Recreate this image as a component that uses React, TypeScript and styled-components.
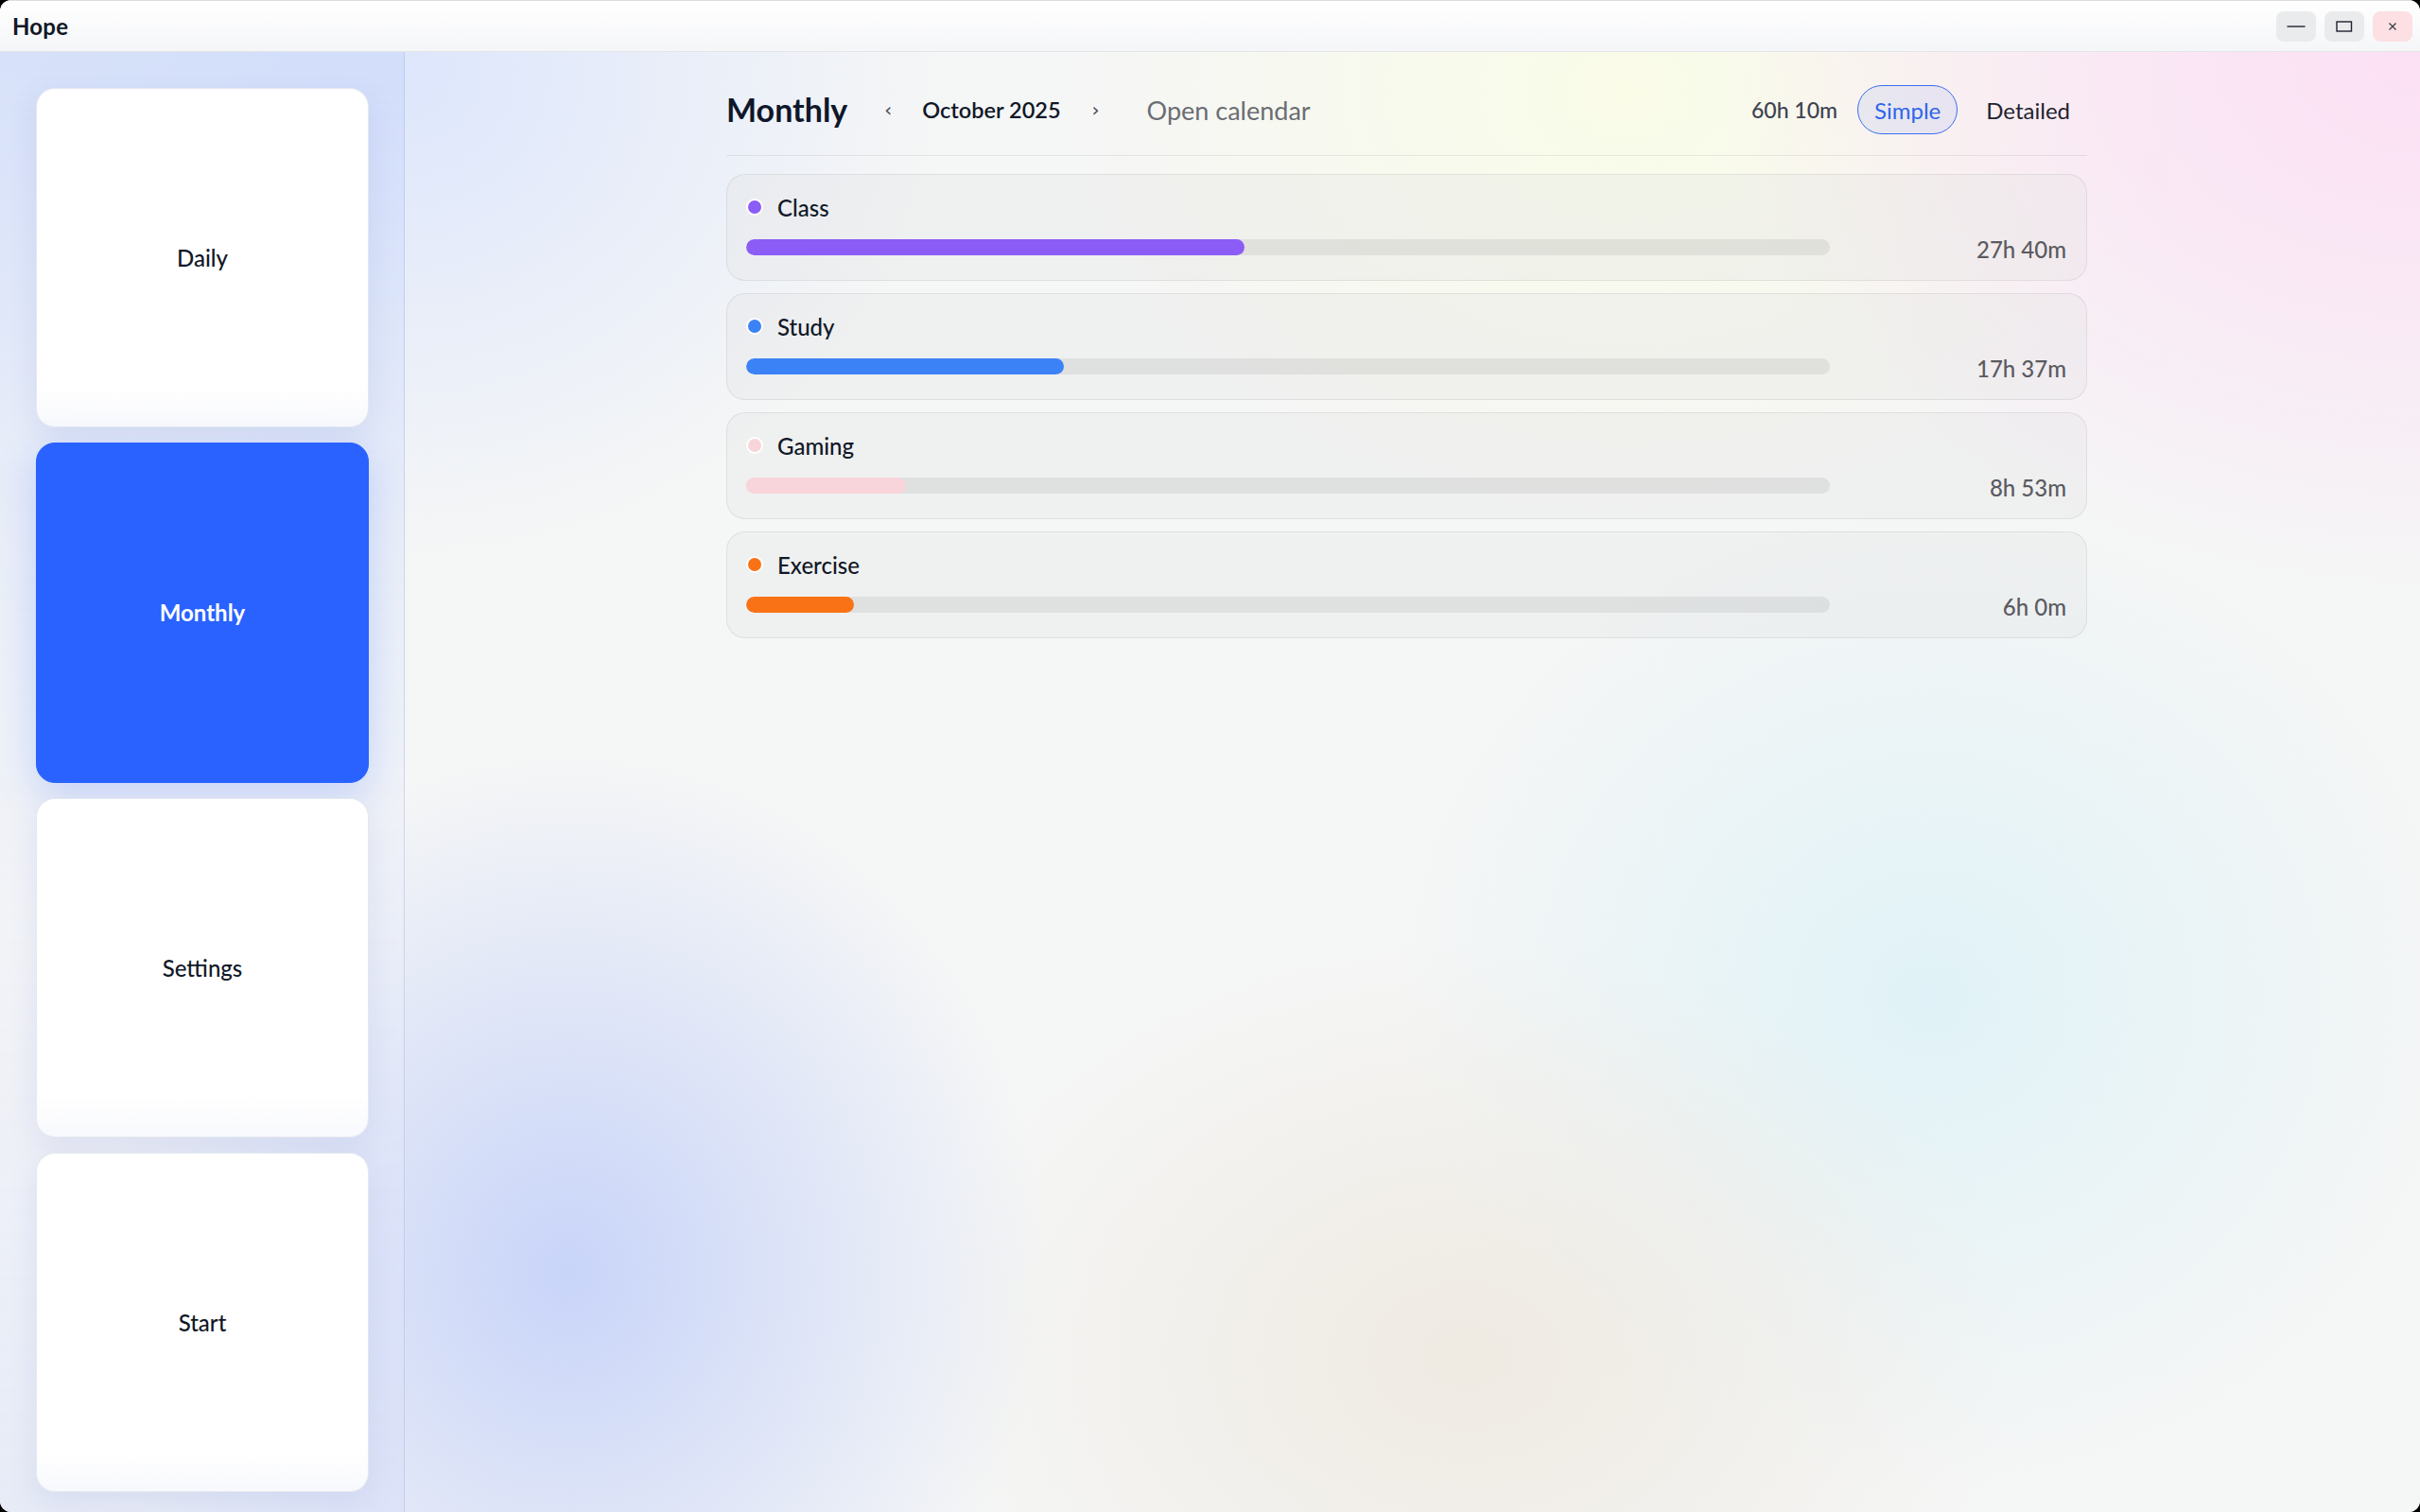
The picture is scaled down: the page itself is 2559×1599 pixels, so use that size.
import React from "react";
import styled, { createGlobalStyle, css } from "styled-components";

const GlobalStyle = createGlobalStyle`
  html, body {
    margin: 0;
    padding: 0;
    height: 100%;
    background: #000;
  }
  #root { height: 100%; }
  * { box-sizing: border-box; }
  body {
    font-family: "Lato", "Open Sans", "Noto Sans", sans-serif;
    color: #111827;
    -webkit-font-smoothing: antialiased;
  }
`;

const Window = styled.div`
  height: 100vh;
  display: flex;
  flex-direction: column;
  border-radius: 12px;
  overflow: hidden;
  background: #f6f7f9;
`;

const TitleBar = styled.header`
  height: 55px;
  flex: 0 0 55px;
  display: flex;
  align-items: center;
  justify-content: space-between;
  padding: 0 8px 0 13px;
  background: linear-gradient(180deg, #ffffff 0%, #f5f6f8 100%);
  border-top: 1px solid #dcdde0;
  border-bottom: 1px solid #e2e4e8;
`;

const AppName = styled.div`
  font-size: 24px;
  font-weight: 700;
  color: #111827;
  letter-spacing: 0.2px;
`;

const Controls = styled.div`
  display: flex;
  gap: 9px;
`;

const CtrlButton = styled.button<{ $danger?: boolean }>`
  width: 42px;
  height: 32px;
  border: none;
  border-radius: 8px;
  padding: 0;
  display: flex;
  align-items: center;
  justify-content: center;
  background: ${(p) => (p.$danger ? "#fde0e3" : "#eaebed")};
  color: #1f2230;
`;

const Body = styled.div`
  flex: 1;
  display: flex;
  min-height: 0;
  background:
    radial-gradient(ellipse 700px 760px at 600px 1290px, rgba(200, 212, 249, 1), rgba(200, 212, 249, 0) 72%),
    radial-gradient(ellipse 820px 620px at 1550px 1380px, rgba(239, 234, 226, 1), rgba(239, 234, 226, 0) 72%),
    radial-gradient(ellipse 780px 720px at 2040px 1000px, rgba(224, 242, 247, 1), rgba(224, 242, 247, 0) 72%),
    radial-gradient(ellipse 1000px 760px at 2560px 0px, rgba(252, 224, 244, 1), rgba(252, 224, 244, 0.6) 35%, rgba(252, 224, 244, 0) 75%),
    radial-gradient(ellipse 820px 620px at 1720px 40px, rgba(250, 252, 232, 1), rgba(250, 252, 232, 0) 74%),
    radial-gradient(ellipse 780px 700px at 420px 20px, rgba(221, 230, 252, 1), rgba(221, 230, 252, 0) 74%),
    #f5f6f6;
`;

const Sidebar = styled.nav`
  width: 428px;
  flex: 0 0 428px;
  display: flex;
  flex-direction: column;
  gap: 16px;
  padding: 38px 37px 21px 38px;
  border-right: 1px solid rgba(170, 180, 215, 0.45);
  background: linear-gradient(
    180deg,
    rgba(205, 218, 250, 0.7) 0%,
    rgba(222, 230, 250, 0.45) 35%,
    rgba(236, 239, 250, 0.35) 60%,
    rgba(214, 222, 248, 0.45) 100%
  );
`;

const NavCard = styled.button<{ $active?: boolean }>`
  flex: 1;
  border-radius: 20px;
  border: 1px solid rgba(225, 229, 238, 0.9);
  background: linear-gradient(180deg, #ffffff 88%, #f8f9fd 100%);
  font-family: inherit;
  font-size: 24px;
  font-weight: 500;
  color: #111827;
  display: flex;
  align-items: center;
  justify-content: center;
  box-shadow: 0 10px 30px rgba(110, 130, 195, 0.14);
  ${(p) =>
    p.$active &&
    css`
      background: #2962ff;
      border-color: #2962ff;
      color: #ffffff;
      font-weight: 700;
      box-shadow: 0 12px 40px rgba(41, 98, 255, 0.22);
    `}
`;

const Main = styled.main`
  flex: 1;
  display: flex;
  justify-content: center;
  padding: 35px 12px 0 0;
  min-width: 0;
`;

const Content = styled.div`
  width: 1439px;
  display: flex;
  flex-direction: column;
`;

const Header = styled.div`
  display: flex;
  align-items: center;
  justify-content: space-between;
  padding-bottom: 22px;
  border-bottom: 1px solid rgba(0, 0, 0, 0.07);
`;

const HeaderLeft = styled.div`
  display: flex;
  align-items: center;
  height: 52px;
`;

const PageTitle = styled.h1`
  margin: 0 25px 0 0;
  font-size: 34px;
  font-weight: 700;
  color: #0f172a;
  line-height: 1;
`;

const Chevron = styled.button`
  width: 36px;
  height: 40px;
  border: none;
  background: none;
  padding: 0;
  font-family: "DejaVu Sans", sans-serif;
  font-size: 20px;
  color: #4b4f5a;
  display: flex;
  align-items: center;
  justify-content: center;
`;

const MonthLabel = styled.span`
  margin: 0 19px 0 18px;
  font-size: 23.5px;
  font-weight: 600;
  color: #111827;
`;

const OpenCalendar = styled.button`
  margin-left: 36px;
  border: none;
  background: none;
  padding: 0;
  font-family: inherit;
  font-size: 27px;
  font-weight: 400;
  color: #6b6d73;
`;

const HeaderRight = styled.div`
  display: flex;
  align-items: center;
  gap: 12px;
`;

const Total = styled.span`
  margin-right: 9px;
  font-size: 23px;
  font-weight: 500;
  color: #3d4150;
`;

const ModeButton = styled.button<{ $active?: boolean }>`
  height: 52px;
  padding: 0 17px;
  border-radius: 26px;
  border: 1.5px solid transparent;
  background: none;
  font-family: inherit;
  font-size: 24px;
  font-weight: 400;
  color: #1f2330;
  ${(p) =>
    p.$active &&
    css`
      border-color: #3b6ff0;
      background: rgba(70, 110, 240, 0.09);
      color: #2f66e8;
    `}
`;

const List = styled.div`
  margin-top: 19px;
  display: flex;
  flex-direction: column;
  gap: 13px;
`;

const Row = styled.div`
  border-radius: 20px;
  border: 1.5px solid rgba(0, 0, 0, 0.07);
  background: rgba(226, 226, 226, 0.3);
  padding: 18px 21px 19px 20px;
  display: flex;
  flex-direction: column;
  gap: 10px;
`;

const NameLine = styled.div`
  display: flex;
  align-items: center;
  gap: 17px;
  height: 32px;
`;

const Dot = styled.span<{ $color: string }>`
  width: 14px;
  height: 14px;
  margin-left: 2px;
  border-radius: 50%;
  background: ${(p) => p.$color};
  box-shadow: 0 0 0 2px #ffffff;
  flex: 0 0 14px;
`;

const Name = styled.span`
  font-size: 24px;
  font-weight: 500;
  color: #111827;
`;

const BarLine = styled.div`
  display: grid;
  grid-template-columns: 1fr 228px;
  column-gap: 22px;
  align-items: center;
  height: 32px;
`;

const Track = styled.div`
  height: 17px;
  border-radius: 9px;
  background: rgba(0, 0, 0, 0.065);
  overflow: hidden;
`;

const Fill = styled.div<{ $color: string }>`
  height: 100%;
  border-radius: 9px;
  background: ${(p) => p.$color};
`;

const Time = styled.span`
  text-align: right;
  font-size: 24px;
  font-weight: 500;
  color: #5a5b60;
  padding-top: 4px;
`;

const categories = [
  { name: "Class", color: "#8b5cf6", minutes: 27 * 60 + 40 },
  { name: "Study", color: "#3b82f6", minutes: 17 * 60 + 37 },
  { name: "Gaming", color: "#f8d5da", minutes: 8 * 60 + 53 },
  { name: "Exercise", color: "#f97316", minutes: 6 * 60 },
];

const fmt = (m: number) => `${Math.floor(m / 60)}h ${m % 60}m`;

export default function App() {
  const total = categories.reduce((s, c) => s + c.minutes, 0);
  return (
    <>
      <GlobalStyle />
      <Window>
        <TitleBar>
          <AppName>Hope</AppName>
          <Controls>
            <CtrlButton aria-label="Minimize">
              <svg width="20" height="4" viewBox="0 0 20 4">
                <line x1="0.5" y1="2" x2="19.5" y2="2" stroke="#1f2230" strokeWidth="1.4" />
              </svg>
            </CtrlButton>
            <CtrlButton aria-label="Maximize">
              <svg width="18" height="12" viewBox="0 0 18 12">
                <rect x="1" y="1" width="15.5" height="10" fill="none" stroke="#1f2230" strokeWidth="1.4" />
              </svg>
            </CtrlButton>
            <CtrlButton $danger aria-label="Close">
              <svg width="10" height="10" viewBox="0 0 10 10">
                <path d="M1.5 1.5 L8.5 8.5 M8.5 1.5 L1.5 8.5" stroke="#3a3d48" strokeWidth="1.3" />
              </svg>
            </CtrlButton>
          </Controls>
        </TitleBar>
        <Body>
          <Sidebar>
            <NavCard>Daily</NavCard>
            <NavCard $active>Monthly</NavCard>
            <NavCard>Settings</NavCard>
            <NavCard>Start</NavCard>
          </Sidebar>
          <Main>
            <Content>
              <Header>
                <HeaderLeft>
                  <PageTitle>Monthly</PageTitle>
                  <Chevron aria-label="Previous month">‹</Chevron>
                  <MonthLabel>October 2025</MonthLabel>
                  <Chevron aria-label="Next month">›</Chevron>
                  <OpenCalendar>Open calendar</OpenCalendar>
                </HeaderLeft>
                <HeaderRight>
                  <Total>{fmt(total)}</Total>
                  <ModeButton $active>Simple</ModeButton>
                  <ModeButton>Detailed</ModeButton>
                </HeaderRight>
              </Header>
              <List>
                {categories.map((c) => (
                  <Row key={c.name}>
                    <NameLine>
                      <Dot $color={c.color} />
                      <Name>{c.name}</Name>
                    </NameLine>
                    <BarLine>
                      <Track>
                        <Fill $color={c.color} style={{ width: `${(c.minutes / total) * 100}%` }} />
                      </Track>
                      <Time>{fmt(c.minutes)}</Time>
                    </BarLine>
                  </Row>
                ))}
              </List>
            </Content>
          </Main>
        </Body>
      </Window>
    </>
  );
}
